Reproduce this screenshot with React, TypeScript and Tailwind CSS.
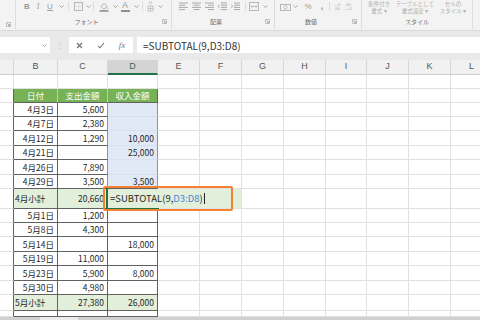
import React from 'react';

const W = ['w-[14px]', 'w-[44px]', 'w-[50px]', 'w-[50px]', 'w-[42px]', 'w-[42px]', 'w-[42px]', 'w-[42px]', 'w-[41px]', 'w-[42px]', 'w-[42px]', 'w-[42px]'];
const LETTERS = ['', 'B', 'C', 'D', 'E', 'F', 'G', 'H', 'I', 'J', 'K', 'L'];

type Kind = 'blank' | 'head' | 'data' | 'sub' | 'edit' | 'tail';
type RowDef = { h: string; kind: Kind; b?: string; c?: string; d?: string };

const rows: RowDef[] = [
  { h: 'h-[14px]', kind: 'blank' },
  { h: 'h-[14px]', kind: 'head', b: '日付', c: '支出金額', d: '収入金額' },
  { h: 'h-[14px]', kind: 'data', b: '4月3日', c: '5,600' },
  { h: 'h-[14px]', kind: 'data', b: '4月7日', c: '2,380' },
  { h: 'h-[15px]', kind: 'data', b: '4月12日', c: '1,290', d: '10,000' },
  { h: 'h-[14px]', kind: 'data', b: '4月21日', d: '25,000' },
  { h: 'h-[15px]', kind: 'data', b: '4月26日', c: '7,890' },
  { h: 'h-[14px]', kind: 'data', b: '4月29日', c: '3,500', d: '3,500' },
  { h: 'h-[20px]', kind: 'edit', b: '4月小計', c: '20,660' },
  { h: 'h-[14px]', kind: 'data', b: '5月1日', c: '1,200' },
  { h: 'h-[14px]', kind: 'data', b: '5月8日', c: '4,300' },
  { h: 'h-[15px]', kind: 'data', b: '5月14日', d: '18,000' },
  { h: 'h-[14px]', kind: 'data', b: '5月19日', c: '11,000' },
  { h: 'h-[15px]', kind: 'data', b: '5月23日', c: '5,900', d: '8,000' },
  { h: 'h-[14px]', kind: 'data', b: '5月30日', c: '4,980' },
  { h: 'h-[16px]', kind: 'sub', b: '5月小計', c: '27,380', d: '26,000' },
  { h: 'h-[6px]', kind: 'tail' },
];

function cellClass(r: number, c: number, kind: Kind): string {
  const inT = r >= 2 && c >= 1 && c <= 3;
  const rangeD = r >= 3 && r <= 8;
  let right = 'border-r-[#e1e1e1]';
  let bottom = 'border-b-[#e1e1e1]';
  let bg = 'bg-white';
  if (inT) {
    right = 'border-r-[#616161]';
    bottom = 'border-b-[#616161]';
  }
  if (c === 0 && r >= 2) right = 'border-r-[#616161]';
  if (kind === 'head' && (c === 1 || c === 2)) right = 'border-r-[#b4d6a0]';
  if (rangeD && (c === 2 || c === 3)) right = 'border-r-[#6d98dc]';
  if (rangeD && c === 3) {
    bg = 'bg-[#e2e9f6]';
    if (r < 8) bottom = 'border-b-[#d6e0f1]';
  }
  if (kind === 'head' && inT) bg = 'bg-[#78b257]';
  if ((kind === 'sub' || kind === 'edit') && inT) bg = 'bg-[#e2efda]';
  if (kind === 'edit' && c === 3) right = 'border-r-[#e2efda]';
  if (kind === 'edit' && (c === 4 || c === 5)) {
    bg = 'bg-[#e2efda]';
    if (c === 4) right = 'border-r-[#e2efda]';
  }
  return `${right} ${bottom} ${bg}`;
}

const Caret = () => (
  <svg width="5" height="3" viewBox="0 0 5 3" className="shrink-0">
    <path d="M0.5 0.5 L2.5 2.5 L4.5 0.5" fill="none" stroke="#9a9a9a" strokeWidth="0.9" />
  </svg>
);

const Launcher = () => (
  <svg width="5" height="5" viewBox="0 0 5 5">
    <path d="M0.5 0.5 H4.5 V4.5 H0.5 Z" fill="none" stroke="#b3b3b3" strokeWidth="0.8" />
    <path d="M1.5 1.5 L3.8 3.8 M3.8 2.2 V3.8 H2.2" fill="none" stroke="#9c9c9c" strokeWidth="0.8" />
  </svg>
);

const Sep = ({ w }: { w: string }) => (
  <div className={`${w} flex justify-center`}>
    <div className="w-px h-[9px] bg-[#dcdcdc]" />
  </div>
);

function AlignIcon({ kind }: { kind: number }) {
  const lines: [number, number][][] = [
    [[1, 10], [1, 7], [1, 10], [1, 7]],
    [[1, 10], [2.5, 8.5], [1, 10], [2.5, 8.5]],
    [[1, 10], [4, 10], [1, 10], [4, 10]],
    [[4, 10], [4, 10], [4, 10], [4, 10]],
    [[4, 10], [4, 10], [4, 10], [4, 10]],
  ];
  const ls = lines[kind];
  return (
    <svg width="11" height="9" viewBox="0 0 11 9">
      {ls.map((l, i) => (
        <line key={i} x1={l[0]} x2={l[1]} y1={1 + i * 2.2} y2={1 + i * 2.2} stroke="#a0a0a0" strokeWidth="0.9" />
      ))}
      {kind === 3 && <path d="M2.8 2.5 L1 4.3 L2.8 6" fill="none" stroke="#a0a0a0" strokeWidth="0.8" />}
      {kind === 4 && <path d="M1 2.5 L2.8 4.3 L1 6" fill="none" stroke="#a0a0a0" strokeWidth="0.8" />}
    </svg>
  );
}

function Ribbon() {
  return (
    <div className="flex h-[31px] bg-[#f3f3f3] border-b border-[#d9d9d9] text-[#9a9a9a] overflow-hidden shrink-0">
      {/* clipboard stub */}
      <div className="w-[16px] flex flex-col border-r border-[#dddddd] h-[29px]">
        <div className="h-[19px]" />
        <div className="flex-1 flex items-center justify-end pr-[4px]">
          <Launcher />
        </div>
      </div>
      {/* font group */}
      <div className="w-[156px] flex flex-col border-r border-[#dddddd] h-[29px]">
        <div className="h-[13px] flex items-center pl-[6px]">
          <div className="w-[10px] text-center text-[8px] font-bold leading-none font-['Liberation_Sans',sans-serif]">B</div>
          <div className="w-[12px] text-center text-[8px] italic leading-none font-['Liberation_Serif',serif]">I</div>
          <div className="w-[12px] text-center text-[8px] underline leading-none font-['Liberation_Sans',sans-serif]">U</div>
          <div className="w-[10px] flex justify-center"><Caret /></div>
          <Sep w="w-[4px]" />
          <div className="w-[16px] flex justify-center">
            <svg width="9" height="9" viewBox="0 0 9 9">
              <rect x="0.5" y="0.5" width="8" height="8" fill="none" stroke="#a8a8a8" strokeWidth="0.8" />
              <path d="M4.5 0.5 V8.5 M0.5 4.5 H8.5" stroke="#c4c4c4" strokeWidth="0.8" strokeDasharray="1 1" />
            </svg>
          </div>
          <div className="w-[4px] flex justify-center"><Caret /></div>
          <Sep w="w-[6px]" />
          <div className="w-[16px] flex justify-center">
            <svg width="10" height="10" viewBox="0 0 10 10">
              <path d="M2 4.5 L5 1.5 L8 4.5 L5 7.5 Z" fill="none" stroke="#a0a0a0" strokeWidth="0.9" />
              <path d="M8.2 5.5 Q8.8 6.6 8.2 7" fill="none" stroke="#a0a0a0" strokeWidth="0.8" />
              <rect x="0.5" y="8.2" width="9" height="1.6" fill="#8f8f8f" />
            </svg>
          </div>
          <div className="w-[6px] flex justify-center"><Caret /></div>
          <div className="w-[14px] flex flex-col items-center">
            <span className="text-[9px] leading-[8px] font-['Liberation_Sans',sans-serif]">A</span>
            <div className="w-[9px] h-[1.6px] bg-[#8f8f8f] mt-[1px]" />
          </div>
          <div className="w-[8px] flex justify-center"><Caret /></div>
          <Sep w="w-[4px]" />
          <div className="w-[12px] flex justify-center">
            <svg width="7" height="11" viewBox="0 0 7 11">
              <path d="M1.5 1 H5 L4 2.5 M3.2 1.8 V3.5" fill="none" stroke="#bdbdbd" strokeWidth="0.7" />
              <rect x="1" y="5" width="5" height="5" fill="none" stroke="#b0b0b0" strokeWidth="0.7" />
              <path d="M1 7.5 H6 M3.5 5 V10" stroke="#b0b0b0" strokeWidth="0.6" />
            </svg>
          </div>
          <div className="w-[8px] flex justify-center"><Caret /></div>
        </div>
        <div className="flex-1 flex items-center">
          <div className="flex-1 text-center text-[6px] text-[#6f6f6f]">フォント</div>
          <div className="w-[14px] flex justify-center pt-[1px]"><Launcher /></div>
        </div>
      </div>
      {/* alignment group */}
      <div className="w-[103px] flex flex-col border-r border-[#dddddd] h-[29px]">
        <div className="h-[13px] flex items-center pl-[5px]">
          {[0, 1, 2, 3, 4].map((k) => (
            <div key={k} className="w-[13px] flex justify-center">
              <AlignIcon kind={k} />
            </div>
          ))}
          <Sep w="w-[6px]" />
          <div className="w-[12px] flex justify-center">
            <svg width="10" height="9" viewBox="0 0 10 9">
              <rect x="0.5" y="0.5" width="9" height="8" fill="none" stroke="#a8a8a8" strokeWidth="0.8" />
              <path d="M2 4.5 H8 M3 3.3 L2 4.5 L3 5.7 M7 3.3 L8 4.5 L7 5.7" fill="none" stroke="#a8a8a8" strokeWidth="0.7" />
            </svg>
          </div>
          <div className="w-[10px] flex justify-center"><Caret /></div>
        </div>
        <div className="flex-1 flex items-center">
          <div className="flex-1 text-center text-[6px] text-[#6f6f6f]">配置</div>
          <div className="w-[14px] flex justify-center pt-[1px]"><Launcher /></div>
        </div>
      </div>
      {/* number group */}
      <div className="w-[87px] flex flex-col border-r border-[#dddddd] h-[29px]">
        <div className="h-[13px] flex items-center pl-[3px]">
          <div className="w-[14px] flex justify-center">
            <svg width="11" height="8" viewBox="0 0 11 8">
              <rect x="0.5" y="1.5" width="10" height="6" fill="none" stroke="#a8a8a8" strokeWidth="0.8" />
              <circle cx="5.5" cy="4.5" r="1.6" fill="none" stroke="#a8a8a8" strokeWidth="0.7" />
            </svg>
          </div>
          <div className="w-[6px] flex justify-center"><Caret /></div>
          <div className="w-[20px] text-center text-[8px] leading-none font-['Liberation_Sans',sans-serif]">%</div>
          <div className="w-[8px] text-center text-[9px] font-bold leading-none font-['Liberation_Sans',sans-serif]">,</div>
          <Sep w="w-[6px]" />
          <div className="w-[10px] flex flex-col items-center leading-none text-[4px] text-[#a8a8a8] font-['Liberation_Sans',sans-serif]">
            <span>←0</span>
            <span>.00</span>
          </div>
          <div className="w-[12px] flex flex-col items-center leading-none text-[4px] text-[#a8a8a8] font-['Liberation_Sans',sans-serif]">
            <span>.00</span>
            <span>→.0</span>
          </div>
        </div>
        <div className="flex-1 flex items-center">
          <div className="flex-1 text-center text-[6px] text-[#6f6f6f]">数値</div>
          <div className="w-[14px] flex justify-center pt-[1px]"><Launcher /></div>
        </div>
      </div>
      {/* style group */}
      <div className="w-[111px] flex flex-col border-r border-[#dddddd] h-[29px]">
        <div className="h-[14px] flex justify-around px-[3px] text-[5.5px] leading-[7px] text-[#b0b0b0] pt-px">
          <div className="flex flex-col items-center">
            <span>条件付き</span>
            <span>書式 ▾</span>
          </div>
          <div className="flex flex-col items-center">
            <span>テーブルとして</span>
            <span>書式設定 ▾</span>
          </div>
          <div className="flex flex-col items-center">
            <span>セルの</span>
            <span>スタイル ▾</span>
          </div>
        </div>
        <div className="flex-1 flex items-center justify-center text-[6px] text-[#6f6f6f]">スタイル</div>
      </div>
      <div className="flex-1" />
    </div>
  );
}

function FormulaBar() {
  return (
    <div className="bg-[#e9e9e9] pt-[6px] pb-[7px] shrink-0">
      <div className="flex h-[16px] items-stretch">
        <div className="w-[50px] bg-white flex items-center justify-end pr-[3px]">
          <Caret />
        </div>
        <div className="w-[19px] flex items-center justify-center text-[#c2c2c2] text-[8px]">⋮</div>
        <div className="w-[64px] bg-white flex items-center text-[#6a6a6a]">
          <div className="w-[21px] flex justify-center">
            <svg width="7" height="7" viewBox="0 0 7 7">
              <path d="M1 1 L6 6 M6 1 L1 6" stroke="#707070" strokeWidth="1.1" />
            </svg>
          </div>
          <div className="w-[21px] flex justify-center">
            <svg width="8" height="7" viewBox="0 0 8 7">
              <path d="M1 3.8 L3 5.8 L7 1" fill="none" stroke="#707070" strokeWidth="1.1" />
            </svg>
          </div>
          <div className="w-[22px] text-center text-[9px] italic leading-none font-['Liberation_Serif',serif] text-[#777]">fx</div>
        </div>
        <div className="w-[4px]" />
        <div className="flex-1 bg-white flex items-center pl-[6px] text-[10px] text-[#333]">=SUBTOTAL(9,D3:D8)</div>
      </div>
    </div>
  );
}

function ColumnHeaders() {
  return (
    <div className="flex h-[15px]">
      {W.map((w, c) => {
        const sel = c === 3;
        return (
          <div
            key={c}
            className={`${w} shrink-0 flex items-center justify-center text-[9px] font-['Liberation_Sans',sans-serif] border-r border-[#d6d6d6] ${
              sel ? 'bg-[#d4d4d4] text-[#3f6b4c] border-b-2 border-b-[#217346]' : 'bg-[#f1f1f1] text-[#555] border-b border-b-[#cccccc]'
            }`}
          >
            {LETTERS[c]}
          </div>
        );
      })}
    </div>
  );
}

function Grid() {
  return (
    <div className="relative">
      <ColumnHeaders />
      {rows.map((row, i) => {
        const r = i + 1;
        return (
          <div key={r} className={`flex ${row.h} ${row.kind === 'edit' ? '' : 'overflow-hidden'}`}>
            {W.map((w, c) => {
              let content: React.ReactNode = null;
              let align = 'justify-end pr-[3px]';
              if (row.kind === 'head' && c >= 1 && c <= 3) {
                content = [row.b, row.c, row.d][c - 1];
                align = 'justify-center text-white';
              } else if (c === 1 && row.b) {
                content = row.b;
                if (row.kind === 'sub' || row.kind === 'edit') align = 'justify-start pl-[1px]';
              } else if (c === 2 && row.c) {
                content = row.c;
              } else if (c === 3 && row.d) {
                content = row.d;
              }
              if (row.kind === 'edit' && c === 3) {
                content = (
                  <span className="relative z-10 whitespace-nowrap text-[9.5px] text-[#2a2a2a] flex items-center">
                    =SUBTOTAL(9,<span className="text-[#4a86d8]">D3:D8</span>)
                    <span className="inline-block w-px h-[11px] bg-[#222] ml-[1px]" />
                  </span>
                );
                align = 'justify-start pl-[2px]';
              }
              return (
                <div
                  key={c}
                  className={`${w} shrink-0 border-r border-b flex items-center text-[8.5px] text-[#262626] leading-none ${cellClass(r, c, row.kind)} ${align}`}
                >
                  {content}
                </div>
              );
            })}
          </div>
        );
      })}
      {/* active cell (left and bottom edges visible) */}
      <div className="absolute left-[106px] top-[128px] w-[53px] h-[22px] border-l-2 border-b-2 border-[#217346] pointer-events-none" />
      {/* annotation box */}
      <div className="absolute left-[103px] top-[126px] w-[130px] h-[25px] border-[2.5px] border-[#f58232] rounded-[2px] pointer-events-none" />
    </div>
  );
}

export default function App() {
  return (
    <div className="w-[480px] h-[320px] overflow-hidden bg-white font-['Noto_Sans_CJK_JP',sans-serif] flex flex-col">
      <Ribbon />
      <FormulaBar />
      <Grid />
      <div className="h-[3px] bg-[#d0d0d0] flex shrink-0">
        <div className="w-[40px]" />
        <div className="w-[38px] bg-[#ececec]" />
      </div>
    </div>
  );
}
